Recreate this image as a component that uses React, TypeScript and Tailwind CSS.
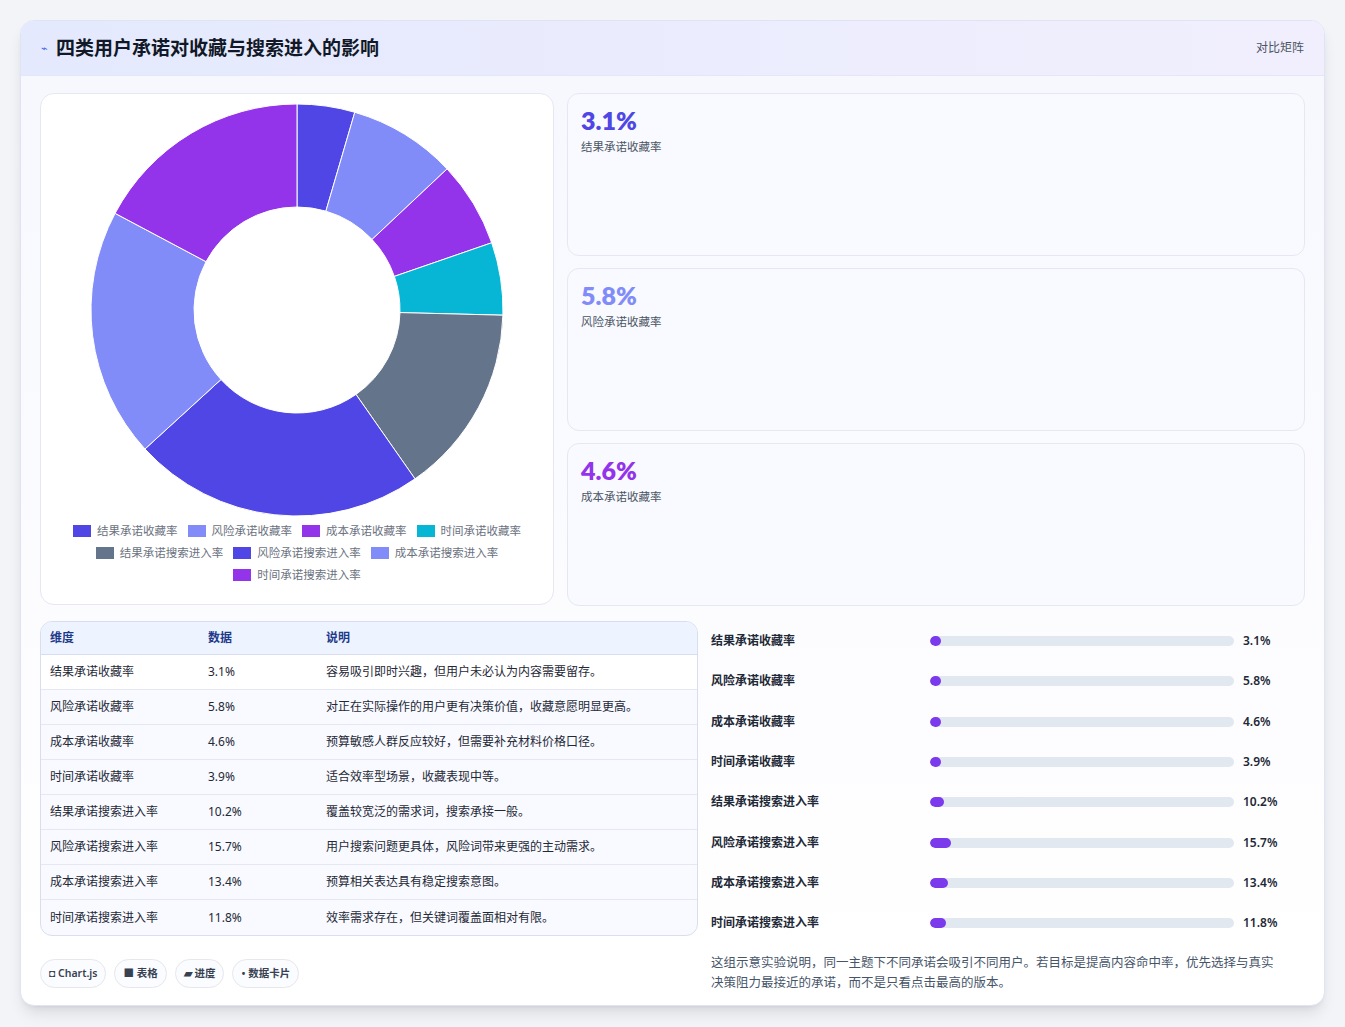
import React from "react";

const data = [
  { n: "结果承诺收藏率", v: 3.1, c: "#4f46e5", d: "容易吸引即时兴趣，但用户未必认为内容需要留存。" },
  { n: "风险承诺收藏率", v: 5.8, c: "#818cf8", d: "对正在实际操作的用户更有决策价值，收藏意愿明显更高。" },
  { n: "成本承诺收藏率", v: 4.6, c: "#9333ea", d: "预算敏感人群反应较好，但需要补充材料价格口径。" },
  { n: "时间承诺收藏率", v: 3.9, c: "#06b6d4", d: "适合效率型场景，收藏表现中等。" },
  { n: "结果承诺搜索进入率", v: 10.2, c: "#64748b", d: "覆盖较宽泛的需求词，搜索承接一般。" },
  { n: "风险承诺搜索进入率", v: 15.7, c: "#4f46e5", d: "用户搜索问题更具体，风险词带来更强的主动需求。" },
  { n: "成本承诺搜索进入率", v: 13.4, c: "#818cf8", d: "预算相关表达具有稳定搜索意图。" },
  { n: "时间承诺搜索进入率", v: 11.8, c: "#9333ea", d: "效率需求存在，但关键词覆盖面相对有限。" },
];

function Donut() {
  const total = data.reduce((s, d) => s + d.v, 0);
  const cx = 206, cy = 206, R = 206, r = 103;
  let a = -Math.PI / 2;
  return (
    <svg width="412" height="412" viewBox="0 0 412 412">
      {data.map((d, i) => {
        const a2 = a + (d.v / total) * Math.PI * 2;
        const p = (ang: number, rad: number) => `${cx + rad * Math.cos(ang)} ${cy + rad * Math.sin(ang)}`;
        const large = a2 - a > Math.PI ? 1 : 0;
        const path = `M ${p(a, R)} A ${R} ${R} 0 ${large} 1 ${p(a2, R)} L ${p(a2, r)} A ${r} ${r} 0 ${large} 0 ${p(a, r)} Z`;
        a = a2;
        return <path key={i} d={path} fill={d.c} stroke="#fff" strokeWidth="1" />;
      })}
    </svg>
  );
}

export default function App() {
  const font = { fontFamily: '"Noto Sans", "Noto Sans CJK SC", sans-serif' };
  return (
    <div className="w-[1345px] h-[1027px] bg-[#f3f4f8] pt-[20px] px-[20px]" style={font}>
      <div className="w-[1305px] h-[986px] bg-white rounded-[14px] border border-[#dfe3f5] shadow-lg overflow-hidden">
        <div className="h-[55px] bg-gradient-to-r from-[#e4e9fd] to-[#f1effd] flex items-center justify-between px-[20px] border-b border-[#e3e7f7]">
          <div className="flex items-center gap-[8px]">
            <span className="text-[#3b63e6] text-[11px]">⌁</span>
            <span className="text-[19px] font-bold text-[#111827]">四类用户承诺对收藏与搜索进入的影响</span>
          </div>
          <span className="text-[12px] text-[#4b5563]">对比矩阵</span>
        </div>
        <div className="bg-gradient-to-b from-[#f7f8fe] to-white px-[19px] pt-[17px]">
          <div className="flex gap-[13px]">
            <div className="w-[514px] h-[512px] bg-white border border-[#e5e8f2] rounded-[14px] flex flex-col items-center pt-[10px]">
              <Donut />
              <div className="mt-[6px] w-[480px] flex flex-wrap justify-center gap-x-[10px] gap-y-[4px] text-[11.5px] text-[#6b7280]">
                {data.map((d, i) => (
                  <div key={i} className="flex items-center gap-[6px] h-[18px]">
                    <span className="w-[18px] h-[12px]" style={{ background: d.c }} />
                    {d.n}
                  </div>
                ))}
              </div>
            </div>
            <div className="flex-1 flex flex-col gap-[12px]">
              {[data[0], data[1], data[2]].map((d, i) => (
                <div key={i} className="h-[163px] bg-[#f8faff] border border-[#e5e8f2] rounded-[12px] px-[13px] pt-[8px]">
                  <div className="text-[25px] font-extrabold leading-[36px]" style={{ color: d.c, fontFamily: "Lato, sans-serif" }}>{d.v}%</div>
                  <div className="text-[11.5px] text-[#4b5563]">{d.n}</div>
                </div>
              ))}
            </div>
          </div>
          <div className="flex gap-[13px] mt-[15px]">
            <div className="w-[658px]">
              <div className="border border-[#d8deef] rounded-[12px] overflow-hidden bg-[#f8faff]">
                <div className="flex h-[33px] items-center bg-[#eef4ff] border-b border-[#d8deef] text-[12px] font-semibold text-[#1e3a8a] px-[9px]">
                  <div className="w-[158px]">维度</div><div className="w-[118px]">数据</div><div>说明</div>
                </div>
                {data.map((d, i) => (
                  <div key={i} className={`flex h-[35px] items-center text-[12px] text-[#1f2937] px-[9px] ${i < 7 ? "border-b border-[#e5e8f2]" : ""} ${i === 0 ? "bg-white" : ""}`}>
                    <div className="w-[158px]">{d.n}</div><div className="w-[118px]">{d.v}%</div><div>{d.d}</div>
                  </div>
                ))}
              </div>
              <div className="flex gap-[8px] mt-[23px] text-[10.5px] font-semibold text-[#374151]">
                {["◘ Chart.js", "■ 表格", "▰ 进度", "• 数据卡片"].map((t) => (
                  <span key={t} className="h-[29px] px-[8px] flex items-center rounded-full border border-[#e5e7eb] bg-[#fbfcff]">{t}</span>
                ))}
              </div>
            </div>
            <div className="flex-1 pr-[20px]">
              <div className="flex flex-col">
                {data.map((d, i) => (
                  <div key={i} className="h-[40.3px] flex items-center text-[12px] font-semibold text-[#1f2937]">
                    <div className="w-[219px]">{d.n}</div>
                    <div className="w-[304px] h-[10px] rounded-full bg-[#e2e8f0] overflow-hidden">
                      <div className="h-full rounded-full bg-[#7c3aed]" style={{ width: Math.max(11, d.v * 1.35) }} />
                    </div>
                    <div className="ml-[9px]">{d.v}%</div>
                  </div>
                ))}
              </div>
              <p className="mt-[10px] text-[12.5px] leading-[20px] text-[#475569]">这组示意实验说明，同一主题下不同承诺会吸引不同用户。若目标是提高内容命中率，优先选择与真实决策阻力最接近的承诺，而不是只看点击最高的版本。</p>
            </div>
          </div>
        </div>
      </div>
    </div>
  );
}
